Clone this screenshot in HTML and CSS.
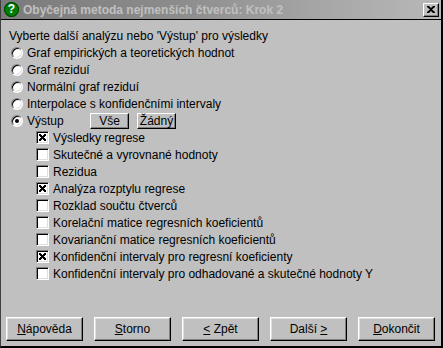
FILE: index.html
```html
<!DOCTYPE html>
<html lang="cs">
<head>
    <meta charset="UTF-8">
    <title>Obyčejná metoda nejmenších čtverců: Krok 2</title>
    <link rel="stylesheet" href="styles.css">
</head>
<body>
    <div class="window">
        <div class="titlebar">
            <span class="title-icon">?</span>
            <span class="title-text">Obyčejná metoda nejmenších čtverců: Krok 2</span>
            <span class="close-btn">
                <svg width="8" height="7" viewBox="0 0 8 7"><path d="M0 0h2l2 2 2-2h2v1l-3 2.5 3 2.5v1h-2l-2-2-2 2h-2v-1l3-2.5-3-2.5z" fill="#000"/></svg>
            </span>
        </div>
        <div class="content">
            <div class="row intro">Vyberte další analýzu nebo 'Výstup' pro výsledky</div>
            <div class="row"><span class="radio"></span>Graf empirických a teoretických hodnot</div>
            <div class="row"><span class="radio"></span>Graf reziduí</div>
            <div class="row"><span class="radio"></span>Normální graf reziduí</div>
            <div class="row"><span class="radio"></span>Interpolace s konfidenčními intervaly</div>
            <div class="row"><span class="radio checked"></span><span class="vystup">Výstup</span>
                <span class="small-btn">Vše</span>
                <span class="small-btn">Žádný</span>
            </div>
            <div class="checks">
                <div class="row"><span class="check on"></span>Výsledky regrese</div>
                <div class="row"><span class="check"></span>Skutečné a vyrovnané hodnoty</div>
                <div class="row"><span class="check"></span>Rezidua</div>
                <div class="row"><span class="check on"></span>Analýza rozptylu regrese</div>
                <div class="row"><span class="check"></span>Rozklad součtu čtverců</div>
                <div class="row"><span class="check"></span>Korelační matice regresních koeficientů</div>
                <div class="row"><span class="check"></span>Kovarianční matice regresních koeficientů</div>
                <div class="row"><span class="check on"></span>Konfidenční intervaly pro regresní koeficienty</div>
                <div class="row"><span class="check"></span>Konfidenční intervaly pro odhadované a skutečné hodnoty Y</div>
            </div>
        </div>
        <div class="buttons">
            <span class="btn"><span><u>N</u>ápověda</span></span>
            <span class="btn"><span><u>S</u>torno</span></span>
            <span class="btn"><span><u>&lt;</u> Zpět</span></span>
            <span class="btn"><span>Další <u>&gt;</u></span></span>
            <span class="btn"><span><u>D</u>okončit</span></span>
        </div>
    </div>
</body>
</html>
```

FILE: styles.css
```css
body {
    margin: 0;
    background-color: #c0c0c0;
    font-family: "Liberation Sans", Arial, sans-serif;
    font-size: 12px;
    color: #000;
}
.window {
    width: 443px;
    height: 348px;
    box-sizing: border-box;
    border-left: 1px solid #404040;
    border-right: 2px solid #000;
    border-bottom: 2px solid #000;
    display: flex;
    flex-direction: column;
    background-color: #c0c0c0;
}
.titlebar {
    height: 19px;
    border-bottom: 1px solid #000;
    background: linear-gradient(to right, #7b7b7b, #8c8c8c 40%, #a8a8a8 75%, #b8b8b8);
    display: flex;
    align-items: center;
    padding-left: 3px;
}
.title-icon {
    width: 15px;
    height: 15px;
    border-radius: 50%;
    background-color: #008000;
    box-shadow: inset 0 0 0 1px #004000;
    color: #fff;
    font-weight: bold;
    font-size: 12px;
    line-height: 15px;
    text-align: center;
}
.title-text {
    margin-left: 4px;
    font-weight: bold;
    font-size: 12px;
    color: #c0c0c0;
}
.close-btn {
    margin-left: auto;
    margin-right: 2px;
    width: 14px;
    height: 12px;
    background-color: #c0c0c0;
    border: 1px solid;
    border-color: #fff #000 #000 #fff;
    box-shadow: inset -1px -1px #808080;
    display: flex;
    align-items: center;
    justify-content: center;
}
.content {
    padding: 7px 0 0 8px;
}
.row {
    height: 17px;
    display: flex;
    align-items: center;
    white-space: nowrap;
}
.radio {
    width: 10px;
    height: 10px;
    margin: 0 4px 0 2px;
    border-radius: 50%;
    background-color: #fff;
    border: 1px solid;
    border-color: #808080 #fff #fff #808080;
    box-shadow: inset 1px 1px #000, inset -1px -1px #dfdfdf;
    position: relative;
}
.radio.checked::after {
    content: "";
    position: absolute;
    left: 3px;
    top: 3px;
    width: 4px;
    height: 4px;
    border-radius: 50%;
    background-color: #000;
}
.vystup {
    width: 63px;
}
.small-btn {
    width: 37px;
    height: 14px;
    margin-right: 8px;
    border: 1px solid;
    border-color: #fff #000 #000 #fff;
    box-shadow: inset -1px -1px #808080;
    text-align: center;
    line-height: 14px;
}
.checks {
    padding-left: 27px;
}
.check {
    width: 11px;
    height: 11px;
    margin-right: 4px;
    background-color: #fff;
    border: 1px solid;
    border-color: #808080 #fff #fff #808080;
    box-shadow: inset 1px 1px #000, inset -1px -1px #dfdfdf;
    position: relative;
}
.check.on::after {
    content: "";
    position: absolute;
    left: 2px;
    top: 2px;
    width: 7px;
    height: 7px;
    background:
        linear-gradient(45deg, transparent 38%, #000 38%, #000 62%, transparent 62%),
        linear-gradient(-45deg, transparent 38%, #000 38%, #000 62%, transparent 62%);
}
.buttons {
    margin-top: auto;
    margin-bottom: 5px;
    padding-left: 5px;
    display: flex;
    gap: 11px;
}
.btn {
    width: 75px;
    height: 22px;
    border: 1px solid;
    border-color: #fff #000 #000 #fff;
    box-shadow: inset -1px -1px #808080, inset 1px 1px #dfdfdf;
    display: flex;
    align-items: center;
    justify-content: center;
}
```
